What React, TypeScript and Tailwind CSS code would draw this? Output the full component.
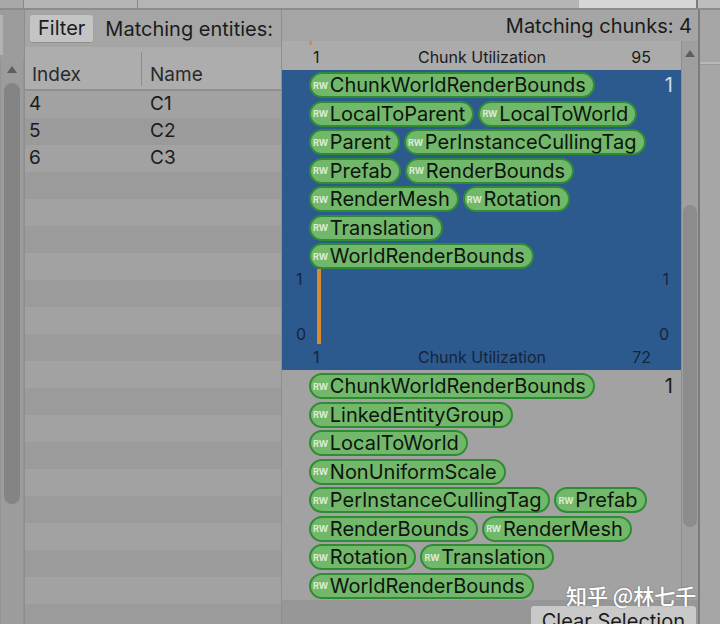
import React from 'react'

const chunkA = [
  'ChunkWorldRenderBounds',
  'LocalToParent',
  'LocalToWorld',
  'Parent',
  'PerInstanceCullingTag',
  'Prefab',
  'RenderBounds',
  'RenderMesh',
  'Rotation',
  'Translation',
  'WorldRenderBounds',
]

const chunkB = [
  'ChunkWorldRenderBounds',
  'LinkedEntityGroup',
  'LocalToWorld',
  'NonUniformScale',
  'PerInstanceCullingTag',
  'Prefab',
  'RenderBounds',
  'RenderMesh',
  'Rotation',
  'Translation',
  'WorldRenderBounds',
]

const entities = [
  { index: '4', name: 'C1' },
  { index: '5', name: 'C2' },
  { index: '6', name: 'C3' },
]

function Tag({ name }: { name: string }) {
  return (
    <span className="inline-flex h-[26px] items-center rounded-full border-2 border-[#2f8c35] bg-[#72b86b] pl-[2px] pr-[7px]">
      <span className="mr-[2px] text-[9px] font-bold leading-none tracking-tight text-[#dcecd8]">RW</span>
      <span className="text-[20px] leading-none text-[#0f140f]">{name}</span>
    </span>
  )
}

function Footer({ max, dark }: { max: string; dark?: boolean }) {
  return (
    <div
      className={`flex h-[26px] items-center pl-[31px] pr-[30px] text-[16px] ${
        dark ? 'text-[#14243a]' : 'text-[#1b1b1b]'
      }`}
    >
      <div className="w-[60px]">1</div>
      <div className="flex-1 text-center">Chunk Utilization</div>
      <div className="w-[60px] text-right">{max}</div>
    </div>
  )
}

function Tags({ tags, dark }: { tags: string[]; dark?: boolean }) {
  return (
    <div className="flex pl-[27px] pt-[2px]">
      <div className="flex w-[352px] flex-wrap gap-x-[4px] gap-y-[2.5px]">
        {tags.map((t, i) => (
          <Tag key={i} name={t} />
        ))}
      </div>
      <div className={`flex-1 pr-[8px] text-right text-[20px] leading-[26px] ${dark ? 'text-[#cfdbe9]' : 'text-[#1b1b1b]'}`}>
        1
      </div>
    </div>
  )
}

export default function App() {
  const rows = Array.from({ length: 20 })
  return (
    <div className="relative h-[624px] w-[720px] overflow-hidden bg-[#a2a2a2] font-['Inter','Noto_Sans',sans-serif] text-[#1b1b1b]">
      {/* top strip */}
      <div className="flex h-[10px] border-b-2 border-[#8c8c8c]">
        <div className="w-[24px] border-r border-[#8a8a8a] bg-[#a8a8a8]" />
        <div className="w-[114px] border-r border-[#8a8a8a] bg-[#b4b4b4]" />
        <div className="w-[441px] bg-[#b4b4b4]" />
        <div className="w-[119px] border-r-2 border-[#7c7c7c] bg-[#d6d6d6]" />
        <div className="flex-1 bg-[#bdbdbd]" />
      </div>

      <div className="flex h-[614px]">
        {/* left narrow column with scrollbar */}
        <div className="flex w-[25px] shrink-0 flex-col border-r border-[#8e8e8e] bg-[#9c9c9c]">
          <div className="flex h-[48px] shrink-0 pt-[5px]">
            <div className="h-[40px] w-[3px] bg-[#b2b2b2]" />
          </div>
          <div className="flex flex-1 flex-col items-center border-x border-[#939393]">
            <div className="mt-[8px] h-0 w-0 border-x-[5px] border-b-[7px] border-x-transparent border-b-[#5e5e5e]" />
            <div className="mt-[10px] h-[421px] w-[16px] rounded-full bg-[#848484]" />
          </div>
        </div>

        {/* entity list */}
        <div className="flex w-[256px] shrink-0 flex-col">
          <div className="flex h-[37px] shrink-0 items-center gap-[12px] bg-[#a5a5a5] pl-[5px]">
            <div className="flex h-[28px] items-center rounded-[3px] border-b border-[#8f8f8f] bg-[#c4c4c4] px-[8px] text-[20px]">
              Filter
            </div>
            <div className="whitespace-nowrap text-[20px]">Matching entities:</div>
          </div>
          <div className="flex h-[44px] shrink-0 items-end border-b-2 border-[#8f8f8f] bg-[#adadad] pb-[3px] text-[19px] leading-[22px] text-[#2a2a2a]">
            <div className="flex h-[34px] w-[117px] items-end border-r border-[#8c8c8c] pl-[7px]">Index</div>
            <div className="pl-[8px]">Name</div>
          </div>
          <div className="flex-1 overflow-hidden">
            {rows.map((_, i) => {
              const e = entities[i]
              return (
                <div
                  key={i}
                  className={`flex h-[27px] items-center text-[19px] ${i % 2 === 0 ? 'bg-[#a2a2a2]' : 'bg-[#9b9b9b]'}`}
                >
                  <div className="w-[118px] pl-[4px]">{e ? e.index : ''}</div>
                  <div className="pl-[7px]">{e ? e.name : ''}</div>
                </div>
              )
            })}
          </div>
        </div>

        {/* chunk panel */}
        <div className="flex w-[417px] shrink-0 flex-col border-l border-[#8e8e8e]">
          <div className="flex h-[31px] shrink-0 items-center justify-end bg-[#a5a5a5] pr-[6px] text-[20px]">
            Matching chunks: 4
          </div>
          <div className="flex h-[559px] shrink-0">
            <div className="w-[399px] overflow-hidden">
              {/* previous chunk tail */}
              <div className="relative bg-[#ababab]">
                <div className="absolute left-[27px] top-[-1px] h-[5px] w-[3px] bg-[#e08a2a]" />
                <div className="pt-[3px]">
                  <Footer max="95" />
                </div>
              </div>
              {/* selected chunk */}
              <div className="bg-[#2d5a8e]">
                <Tags tags={chunkA} dark />
                <div className="flex h-[75px] text-[16px] leading-[20px] text-[#14243a]">
                  <div className="flex w-[21px] flex-col justify-between pl-[14px]">
                    <span>1</span>
                    <span>0</span>
                  </div>
                  <div className="ml-[14px] w-[4px] bg-[#d98a2c]" />
                  <div className="flex-1" />
                  <div className="flex w-[30px] flex-col justify-between pr-[12px] text-right">
                    <span>1</span>
                    <span>0</span>
                  </div>
                </div>
                <Footer max="72" dark />
              </div>
              {/* next chunk */}
              <div className="pt-[1px]">
                <Tags tags={chunkB} />
                <div className="relative mt-[1px] flex h-[10px] items-start pl-[17px] text-[12px] leading-none">
                  <span>-</span>
                  <div className="ml-[9px] h-[8px] w-[4px] bg-[#d98a2c]" />
                </div>
              </div>
            </div>
            {/* scrollbar */}
            <div className="flex flex-1 flex-col items-center border-l border-[#8e8e8e] bg-[#9f9f9f]">
              <div className="mt-[9px] h-0 w-0 border-x-[5px] border-b-[7px] border-x-transparent border-b-[#5e5e5e]" />
              <div className="mt-[148px] h-[322px] w-[14px] rounded-full bg-[#8c8c8c]" />
            </div>
          </div>
          <div className="flex h-[24px] shrink-0 justify-end bg-[#979797] pr-[2px] pt-[6px]">
            <div className="h-[30px] shrink-0 rounded-[3px] bg-[#c9c9c9] px-[11px] pt-[3px] text-[20px] leading-[24px]">
              Clear Selection
            </div>
          </div>
        </div>

        {/* right edge strip */}
        <div className="flex-1 border-l-2 border-[#7c7c7c] bg-[#a6a6a6]">
          <div className="mt-[52px] h-[2px] bg-[#b8b8b8]" />
          <div className="h-[1px] bg-[#9a9a9a]" />
        </div>
      </div>

      {/* watermark */}
      <div className="absolute left-[566px] top-[580px] font-['Noto_Sans_CJK_SC',sans-serif] text-[21px] font-medium text-white [text-shadow:0_0_2px_rgba(0,0,0,0.35)]">
        知乎 @林七千
      </div>
    </div>
  )
}
